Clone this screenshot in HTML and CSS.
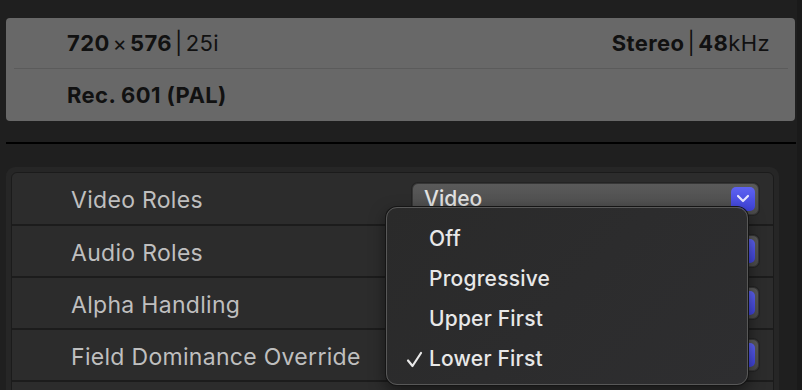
FILE: index.html
```html
<!DOCTYPE html>
<html lang="en">
<head>
  <meta charset="UTF-8" />
  <title>Clip Inspector</title>
  <link rel="stylesheet" href="styles.css">
</head>
<body>
  <div class="page">
    <div class="info">
      <div class="info-row">
        <span><b>720</b><span class="times">×</span><b>576</b><span class="sep">|</span>25i</span>
        <span><b>Stereo</b><span class="sep">|</span><b>48</b>kHz</span>
      </div>
      <div class="info-divider"></div>
      <div class="info-row">
        <b>Rec. 601 (PAL)</b>
      </div>
    </div>

    <div class="rule"></div>

    <div class="panel">
      <div class="rows">
        <div class="row first">
          <span class="label">Video Roles</span>
          <div class="popup">
            <span>Video</span>
            <span class="chevron">
              <svg width="14" height="9" viewBox="0 0 14 9"><path d="M2 2 L7 7 L12 2" fill="none" stroke="#e6e6ff" stroke-width="2.2" stroke-linecap="round" stroke-linejoin="round"/></svg>
            </span>
          </div>
        </div>
        <div class="row">
          <span class="label">Audio Roles</span>
          <div class="popup"><span></span><span class="chevron"></span></div>
        </div>
        <div class="row">
          <span class="label">Alpha Handling</span>
          <div class="popup"><span></span><span class="chevron"></span></div>
        </div>
        <div class="row">
          <span class="label">Field Dominance Override</span>
          <div class="popup"><span></span><span class="chevron"></span></div>
        </div>
        <div class="row"></div>
      </div>
    </div>

    <ul class="menu">
      <li>Off</li>
      <li>Progressive</li>
      <li>Upper First</li>
      <li>
        <svg class="check" width="17" height="17" viewBox="0 0 17 17"><path d="M2 9.5 L6.5 15 L15 2" fill="none" stroke="#e8e8e8" stroke-width="2.2" stroke-linecap="round" stroke-linejoin="round"/></svg>
        Lower First
      </li>
    </ul>
  </div>
</body>
</html>
```

FILE: styles.css
```css
body {
  margin: 0;
  background-color: #1a1a1a;
  font-family: Inter, 'Noto Sans', sans-serif;
  overflow: hidden;
}

.page {
  position: relative;
  width: 791px;
  height: 390px;
  padding: 18px 0 0 6px;
  background-color: #1f1f1f;
  overflow: hidden;
}

/* top summary box */
.info {
  width: 789px;
  height: 103px;
  background-color: #686868;
  border-radius: 4px;
  color: #111;
  font-size: 22px;
  letter-spacing: 0.4px;
}

.info-row {
  display: flex;
  justify-content: space-between;
  align-items: center;
  height: 50px;
  padding: 0 25px 0 61px;
}

.info-row + .info-divider + .info-row {
  height: 52px;
}

.info b {
  font-weight: 700;
}

.times {
  margin: 0 3px;
  font-size: 21px;
}

.sep {
  margin: 0 3px;
}

.info-divider {
  height: 1px;
  margin: 0 7px 0 8px;
  background-color: #5b5b5b;
}

.rule {
  width: 790px;
  height: 2px;
  margin-top: 21px;
  background-color: #000;
}

/* settings list */
.panel {
  width: 763px;
  margin-top: 23px;
  padding: 5px;
  background-color: #262626;
  border-radius: 9px;
}

.rows {
  border: 1px solid #1b1b1b;
  border-radius: 6px;
  background-color: #2c2c2c;
  overflow: hidden;
}

.row {
  display: flex;
  justify-content: space-between;
  align-items: center;
  height: 50px;
  padding: 0 14px 0 59px;
  border-bottom: 2px solid #1c1c1c;
}

.row.first {
  height: 51px;
}

.label {
  padding-top: 3px;
  color: #bfbfbf;
  font-size: 23px;
  letter-spacing: 0.3px;
}

.popup {
  display: flex;
  justify-content: space-between;
  align-items: center;
  box-sizing: border-box;
  width: 347px;
  height: 32px;
  padding: 0 3px 0 11px;
  border: 1px solid #363636;
  border-radius: 6px;
  background: linear-gradient(#5a5a5a, #4b4b4b);
  box-shadow: 0 0 0 1px #242424;
  color: #e2e2e2;
  font-size: 21px;
  font-weight: 500;
}

.chevron {
  display: flex;
  justify-content: center;
  align-items: center;
  width: 24px;
  height: 24px;
  border-radius: 5px;
  background: linear-gradient(#5e63f2, #3d41d6);
}

/* dropdown menu */
.menu {
  position: absolute;
  left: 386px;
  top: 207px;
  width: 362px;
  height: 178px;
  margin: 0;
  padding: 11px 0 0 0;
  box-sizing: border-box;
  list-style: none;
  background: linear-gradient(135deg, #2a2a2a, #2e2e30);
  border: 1px solid #585858;
  border-radius: 11px;
  box-shadow: 0 0 0 1px #151515, 0 6px 16px rgba(0,0,0,0.5);
  color: #e8e8e8;
  font-size: 21px;
  font-weight: 500;
  letter-spacing: 0.2px;
}

.menu li {
  position: relative;
  height: 40px;
  line-height: 40px;
  padding-left: 42px;
}

.check {
  position: absolute;
  left: 19px;
  top: 12px;
}
```
